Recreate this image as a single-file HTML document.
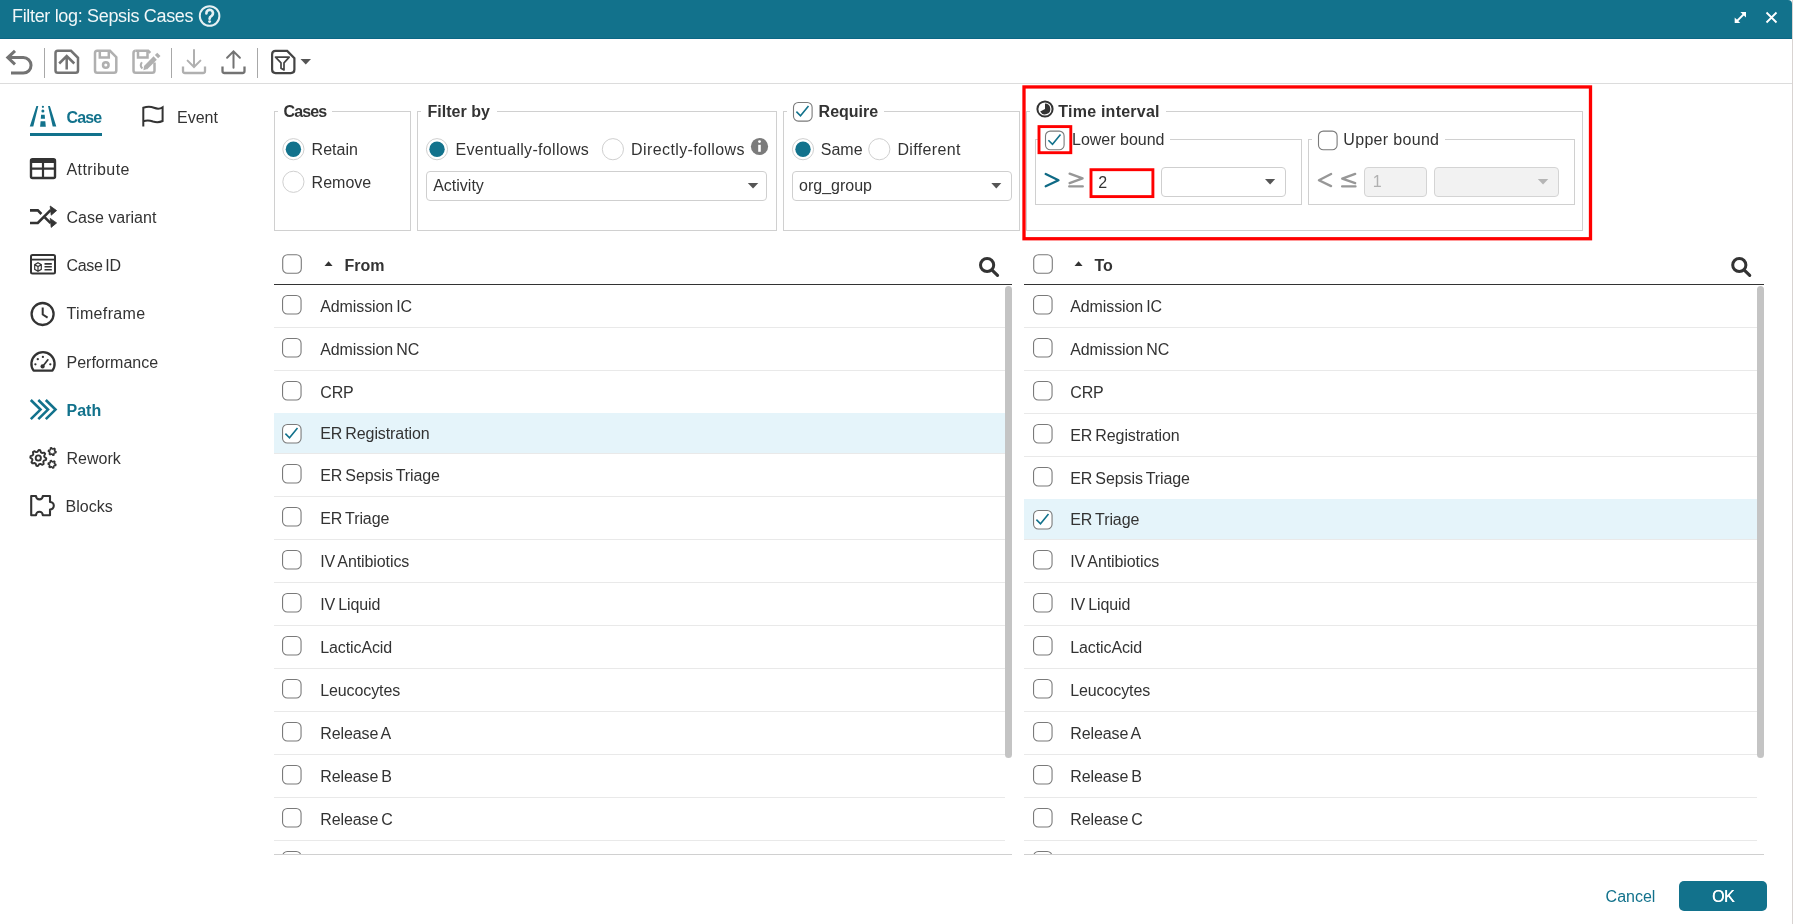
<!DOCTYPE html>
<html><head><meta charset="utf-8"><title>Filter log</title>
<style>
html,body{margin:0;padding:0;background:#fff;}
body{width:1793px;height:924px;position:relative;overflow:hidden;font-family:"Liberation Sans",sans-serif;}
.t{position:absolute;font-family:"Liberation Sans",sans-serif;font-size:16px;line-height:20px;color:#333;white-space:nowrap;}
.b{font-weight:bold;}
.teal{color:#12728c;}
</style></head><body>
<div style="position:absolute;left:0;top:0;width:1793px;height:924px;will-change:transform">
<div style="position:absolute;left:0px;top:0px;width:1792px;height:38px;background:#12728c;border-top-right-radius:4px"></div><div style="position:absolute;left:0px;top:38px;width:1792px;height:1px;background:#0b6785"></div><div style="position:absolute;left:1792px;top:0px;width:1px;height:924px;background:#d9d4d2"></div><div class="t" style="left:12px;top:4px;font-size:18px;line-height:24px;color:rgba(255,255,255,0.94);letter-spacing:-0.33px">Filter log: Sepsis Cases</div><div style="position:absolute;left:0px;top:83px;width:1792px;height:1px;background:#dcdcdc"></div><div style="position:absolute;left:44px;top:48px;width:1px;height:30px;background:#a8a8a8"></div><div style="position:absolute;left:171px;top:48px;width:1px;height:30px;background:#a8a8a8"></div><div style="position:absolute;left:257px;top:48px;width:1px;height:30px;background:#a8a8a8"></div><div style="position:absolute;left:30px;top:133px;width:72px;height:3px;background:#12728c"></div><div class="t b teal" style="left:66.5px;top:108px;letter-spacing:-0.85px">Case</div><div class="t " style="left:177px;top:108px;">Event</div><div style="position:absolute;left:30px;top:158.5px;width:26px;height:4.5px;background:#333;border-radius:2px 2px 0 0"></div><div class="t " style="left:66.5px;top:160px;letter-spacing:0.42px">Attribute</div><div class="t " style="left:66.5px;top:208px;">Case variant</div><div class="t " style="left:66.5px;top:256px;letter-spacing:-0.3px;word-spacing:-1.5px">Case ID</div><div class="t " style="left:66.5px;top:304px;letter-spacing:0.35px">Timeframe</div><div class="t " style="left:66.5px;top:353px;">Performance</div><div class="t b teal" style="left:66.5px;top:401px;">Path</div><div class="t " style="left:66.5px;top:449px;">Rework</div><div class="t " style="left:65.6px;top:497px;">Blocks</div><div style="position:absolute;left:274px;top:111px;width:4px;height:1px;background:#d0d0d0"></div><div style="position:absolute;left:332px;top:111px;width:79px;height:1px;background:#d0d0d0"></div><div style="position:absolute;left:274px;top:111px;width:1px;height:120px;background:#d0d0d0"></div><div style="position:absolute;left:410px;top:111px;width:1px;height:120px;background:#d0d0d0"></div><div style="position:absolute;left:274px;top:230px;width:137px;height:1px;background:#d0d0d0"></div><div class="t b" style="left:283.5px;top:102px;letter-spacing:-0.9px">Cases</div><div class="t " style="left:311.6px;top:140px;">Retain</div><div class="t " style="left:311.6px;top:173px;">Remove</div><div style="position:absolute;left:417px;top:111px;width:4px;height:1px;background:#d0d0d0"></div><div style="position:absolute;left:497px;top:111px;width:280px;height:1px;background:#d0d0d0"></div><div style="position:absolute;left:417px;top:111px;width:1px;height:120px;background:#d0d0d0"></div><div style="position:absolute;left:776px;top:111px;width:1px;height:120px;background:#d0d0d0"></div><div style="position:absolute;left:417px;top:230px;width:360px;height:1px;background:#d0d0d0"></div><div class="t b" style="left:427.6px;top:102px;">Filter by</div><div class="t " style="left:455.5px;top:140px;letter-spacing:0.31px">Eventually-follows</div><div class="t " style="left:631.1px;top:140px;letter-spacing:0.39px">Directly-follows</div><div style="position:absolute;left:426px;top:171px;width:341px;height:30px;box-sizing:border-box;border:1px solid #cfcfcf;border-radius:4px;background:#fff"></div><div class="t " style="left:433.2px;top:176px;">Activity</div><div style="position:absolute;left:783px;top:111px;width:4px;height:1px;background:#d0d0d0"></div><div style="position:absolute;left:884px;top:111px;width:136px;height:1px;background:#d0d0d0"></div><div style="position:absolute;left:783px;top:111px;width:1px;height:120px;background:#d0d0d0"></div><div style="position:absolute;left:1019px;top:111px;width:1px;height:120px;background:#d0d0d0"></div><div style="position:absolute;left:783px;top:230px;width:237px;height:1px;background:#d0d0d0"></div><div class="t b" style="left:818.6px;top:102px;">Require</div><div class="t " style="left:820.8px;top:140px;">Same</div><div class="t " style="left:897.4px;top:140px;letter-spacing:0.36px">Different</div><div style="position:absolute;left:792px;top:171px;width:220px;height:30px;box-sizing:border-box;border:1px solid #cfcfcf;border-radius:4px;background:#fff"></div><div class="t " style="left:799px;top:176px;">org_group</div><div style="position:absolute;left:1026px;top:111px;width:4px;height:1px;background:#d0d0d0"></div><div style="position:absolute;left:1166px;top:111px;width:417px;height:1px;background:#d0d0d0"></div><div style="position:absolute;left:1026px;top:111px;width:1px;height:120px;background:#d0d0d0"></div><div style="position:absolute;left:1582px;top:111px;width:1px;height:120px;background:#d0d0d0"></div><div style="position:absolute;left:1026px;top:230px;width:557px;height:1px;background:#d0d0d0"></div><div class="t b" style="left:1058.3px;top:102px;letter-spacing:0.23px">Time interval</div><div style="position:absolute;left:1035px;top:139px;width:4px;height:1px;background:#d0d0d0"></div><div style="position:absolute;left:1170px;top:139px;width:132px;height:1px;background:#d0d0d0"></div><div style="position:absolute;left:1035px;top:139px;width:1px;height:66px;background:#d0d0d0"></div><div style="position:absolute;left:1301px;top:139px;width:1px;height:66px;background:#d0d0d0"></div><div style="position:absolute;left:1035px;top:204px;width:267px;height:1px;background:#d0d0d0"></div><div class="t " style="left:1072px;top:130px;">Lower bound</div><div style="position:absolute;left:1090px;top:169px;width:64px;height:29px;box-sizing:border-box;border:1px solid #cfcfcf;border-radius:4px;background:#fff"></div><div class="t " style="left:1098.3px;top:173px;">2</div><div style="position:absolute;left:1161px;top:167px;width:125px;height:30px;box-sizing:border-box;border:1px solid #cfcfcf;border-radius:4px;background:#fff"></div><div style="position:absolute;left:1308px;top:139px;width:4px;height:1px;background:#d0d0d0"></div><div style="position:absolute;left:1445px;top:139px;width:130px;height:1px;background:#d0d0d0"></div><div style="position:absolute;left:1308px;top:139px;width:1px;height:66px;background:#d0d0d0"></div><div style="position:absolute;left:1574px;top:139px;width:1px;height:66px;background:#d0d0d0"></div><div style="position:absolute;left:1308px;top:204px;width:267px;height:1px;background:#d0d0d0"></div><div class="t " style="left:1343.3px;top:130px;letter-spacing:0.32px">Upper bound</div><div style="position:absolute;left:1364px;top:167px;width:63px;height:30px;box-sizing:border-box;border:1px solid #d4d4d4;border-radius:4px;background:#f2f2f2"></div><div class="t " style="left:1372.7px;top:172px;color:#b0b0b0">1</div><div style="position:absolute;left:1434px;top:167px;width:125px;height:30px;box-sizing:border-box;border:1px solid #d4d4d4;border-radius:4px;background:#f2f2f2"></div><div class="t b" style="left:344.5px;top:256px;">From</div><div style="position:absolute;left:274px;top:284px;width:738px;height:1.2px;background:#333"></div><div style="position:absolute;left:274px;top:285px;width:738px;height:569px;overflow:hidden"><div style="position:absolute;left:0;top:42px;width:731px;height:1px;background:#e9e9e9"></div><svg style="position:absolute;left:8.2px;top:10.2px" width="20" height="20"><rect x="0.55" y="0.55" width="18.5" height="18.5" rx="4.8" stroke="#7a7a7a" stroke-width="1.1" fill="#fff"/></svg><div class="t" style="left:46.2px;top:12px;word-spacing:-1.2px;letter-spacing:-0.1px">Admission IC</div><div style="position:absolute;left:0;top:85px;width:731px;height:1px;background:#e9e9e9"></div><svg style="position:absolute;left:8.2px;top:53.2px" width="20" height="20"><rect x="0.55" y="0.55" width="18.5" height="18.5" rx="4.8" stroke="#7a7a7a" stroke-width="1.1" fill="#fff"/></svg><div class="t" style="left:46.2px;top:55px;word-spacing:-1.2px;letter-spacing:-0.1px">Admission NC</div><svg style="position:absolute;left:8.2px;top:96.2px" width="20" height="20"><rect x="0.55" y="0.55" width="18.5" height="18.5" rx="4.8" stroke="#7a7a7a" stroke-width="1.1" fill="#fff"/></svg><div class="t" style="left:46.2px;top:98px;word-spacing:-1.2px;letter-spacing:-0.1px">CRP</div><div style="position:absolute;left:0;top:128px;width:731px;height:40px;background:#e5f4fa"></div><div style="position:absolute;left:0;top:168px;width:731px;height:1px;background:#e9e9e9"></div><svg style="position:absolute;left:8.2px;top:139px" width="20" height="20"><rect x="0.55" y="0.55" width="18.5" height="18.5" rx="4.8" stroke="#7a7a7a" stroke-width="1.1" fill="#fff"/><path d="M3.4,9.6 L7.5,13.7 L15.5,4" stroke="#12728c" stroke-width="1.6" fill="none"/></svg><div class="t" style="left:46.2px;top:138.5px;word-spacing:-1.2px;letter-spacing:-0.1px">ER Registration</div><div style="position:absolute;left:0;top:211px;width:731px;height:1px;background:#e9e9e9"></div><svg style="position:absolute;left:8.2px;top:179.2px" width="20" height="20"><rect x="0.55" y="0.55" width="18.5" height="18.5" rx="4.8" stroke="#7a7a7a" stroke-width="1.1" fill="#fff"/></svg><div class="t" style="left:46.2px;top:181px;word-spacing:-1.2px;letter-spacing:-0.1px">ER Sepsis Triage</div><div style="position:absolute;left:0;top:254px;width:731px;height:1px;background:#e9e9e9"></div><svg style="position:absolute;left:8.2px;top:222.2px" width="20" height="20"><rect x="0.55" y="0.55" width="18.5" height="18.5" rx="4.8" stroke="#7a7a7a" stroke-width="1.1" fill="#fff"/></svg><div class="t" style="left:46.2px;top:224px;word-spacing:-1.2px;letter-spacing:-0.1px">ER Triage</div><div style="position:absolute;left:0;top:297px;width:731px;height:1px;background:#e9e9e9"></div><svg style="position:absolute;left:8.2px;top:265.2px" width="20" height="20"><rect x="0.55" y="0.55" width="18.5" height="18.5" rx="4.8" stroke="#7a7a7a" stroke-width="1.1" fill="#fff"/></svg><div class="t" style="left:46.2px;top:267px;word-spacing:-1.2px;letter-spacing:-0.1px">IV Antibiotics</div><div style="position:absolute;left:0;top:340px;width:731px;height:1px;background:#e9e9e9"></div><svg style="position:absolute;left:8.2px;top:308.2px" width="20" height="20"><rect x="0.55" y="0.55" width="18.5" height="18.5" rx="4.8" stroke="#7a7a7a" stroke-width="1.1" fill="#fff"/></svg><div class="t" style="left:46.2px;top:310px;word-spacing:-1.2px;letter-spacing:-0.1px">IV Liquid</div><div style="position:absolute;left:0;top:383px;width:731px;height:1px;background:#e9e9e9"></div><svg style="position:absolute;left:8.2px;top:351.2px" width="20" height="20"><rect x="0.55" y="0.55" width="18.5" height="18.5" rx="4.8" stroke="#7a7a7a" stroke-width="1.1" fill="#fff"/></svg><div class="t" style="left:46.2px;top:353px;word-spacing:-1.2px;letter-spacing:-0.1px">LacticAcid</div><div style="position:absolute;left:0;top:426px;width:731px;height:1px;background:#e9e9e9"></div><svg style="position:absolute;left:8.2px;top:394.2px" width="20" height="20"><rect x="0.55" y="0.55" width="18.5" height="18.5" rx="4.8" stroke="#7a7a7a" stroke-width="1.1" fill="#fff"/></svg><div class="t" style="left:46.2px;top:396px;word-spacing:-1.2px;letter-spacing:-0.1px">Leucocytes</div><div style="position:absolute;left:0;top:469px;width:731px;height:1px;background:#e9e9e9"></div><svg style="position:absolute;left:8.2px;top:437.2px" width="20" height="20"><rect x="0.55" y="0.55" width="18.5" height="18.5" rx="4.8" stroke="#7a7a7a" stroke-width="1.1" fill="#fff"/></svg><div class="t" style="left:46.2px;top:439px;word-spacing:-1.2px;letter-spacing:-0.1px">Release A</div><div style="position:absolute;left:0;top:512px;width:731px;height:1px;background:#e9e9e9"></div><svg style="position:absolute;left:8.2px;top:480.2px" width="20" height="20"><rect x="0.55" y="0.55" width="18.5" height="18.5" rx="4.8" stroke="#7a7a7a" stroke-width="1.1" fill="#fff"/></svg><div class="t" style="left:46.2px;top:482px;word-spacing:-1.2px;letter-spacing:-0.1px">Release B</div><div style="position:absolute;left:0;top:555px;width:731px;height:1px;background:#e9e9e9"></div><svg style="position:absolute;left:8.2px;top:523.2px" width="20" height="20"><rect x="0.55" y="0.55" width="18.5" height="18.5" rx="4.8" stroke="#7a7a7a" stroke-width="1.1" fill="#fff"/></svg><div class="t" style="left:46.2px;top:525px;word-spacing:-1.2px;letter-spacing:-0.1px">Release C</div><div style="position:absolute;left:0;top:598px;width:731px;height:1px;background:#e9e9e9"></div><svg style="position:absolute;left:8.2px;top:566.2px" width="20" height="20"><rect x="0.55" y="0.55" width="18.5" height="18.5" rx="4.8" stroke="#7a7a7a" stroke-width="1.1" fill="#fff"/></svg><div class="t" style="left:46.2px;top:568px;word-spacing:-1.2px;letter-spacing:-0.1px">Release D</div><div style="position:absolute;left:731.2px;top:0.6px;width:6.8px;height:472px;background:#c4c4c4;border-radius:3.5px"></div></div><div style="position:absolute;left:274px;top:854px;width:738px;height:1px;background:#d0d0d0"></div><div class="t b" style="left:1094.5px;top:256px;">To</div><div style="position:absolute;left:1024px;top:284px;width:740px;height:1.2px;background:#333"></div><div style="position:absolute;left:1024px;top:285px;width:740px;height:569px;overflow:hidden"><div style="position:absolute;left:0;top:42px;width:733px;height:1px;background:#e9e9e9"></div><svg style="position:absolute;left:9.2px;top:10.2px" width="20" height="20"><rect x="0.55" y="0.55" width="18.5" height="18.5" rx="4.8" stroke="#7a7a7a" stroke-width="1.1" fill="#fff"/></svg><div class="t" style="left:46.2px;top:12px;word-spacing:-1.2px;letter-spacing:-0.1px">Admission IC</div><div style="position:absolute;left:0;top:85px;width:733px;height:1px;background:#e9e9e9"></div><svg style="position:absolute;left:9.2px;top:53.2px" width="20" height="20"><rect x="0.55" y="0.55" width="18.5" height="18.5" rx="4.8" stroke="#7a7a7a" stroke-width="1.1" fill="#fff"/></svg><div class="t" style="left:46.2px;top:55px;word-spacing:-1.2px;letter-spacing:-0.1px">Admission NC</div><div style="position:absolute;left:0;top:128px;width:733px;height:1px;background:#e9e9e9"></div><svg style="position:absolute;left:9.2px;top:96.2px" width="20" height="20"><rect x="0.55" y="0.55" width="18.5" height="18.5" rx="4.8" stroke="#7a7a7a" stroke-width="1.1" fill="#fff"/></svg><div class="t" style="left:46.2px;top:98px;word-spacing:-1.2px;letter-spacing:-0.1px">CRP</div><div style="position:absolute;left:0;top:171px;width:733px;height:1px;background:#e9e9e9"></div><svg style="position:absolute;left:9.2px;top:139.2px" width="20" height="20"><rect x="0.55" y="0.55" width="18.5" height="18.5" rx="4.8" stroke="#7a7a7a" stroke-width="1.1" fill="#fff"/></svg><div class="t" style="left:46.2px;top:141px;word-spacing:-1.2px;letter-spacing:-0.1px">ER Registration</div><svg style="position:absolute;left:9.2px;top:182.2px" width="20" height="20"><rect x="0.55" y="0.55" width="18.5" height="18.5" rx="4.8" stroke="#7a7a7a" stroke-width="1.1" fill="#fff"/></svg><div class="t" style="left:46.2px;top:184px;word-spacing:-1.2px;letter-spacing:-0.1px">ER Sepsis Triage</div><div style="position:absolute;left:0;top:214px;width:733px;height:40px;background:#e5f4fa"></div><div style="position:absolute;left:0;top:254px;width:733px;height:1px;background:#e9e9e9"></div><svg style="position:absolute;left:9.2px;top:225px" width="20" height="20"><rect x="0.55" y="0.55" width="18.5" height="18.5" rx="4.8" stroke="#7a7a7a" stroke-width="1.1" fill="#fff"/><path d="M3.4,9.6 L7.5,13.7 L15.5,4" stroke="#12728c" stroke-width="1.6" fill="none"/></svg><div class="t" style="left:46.2px;top:224.5px;word-spacing:-1.2px;letter-spacing:-0.1px">ER Triage</div><div style="position:absolute;left:0;top:297px;width:733px;height:1px;background:#e9e9e9"></div><svg style="position:absolute;left:9.2px;top:265.2px" width="20" height="20"><rect x="0.55" y="0.55" width="18.5" height="18.5" rx="4.8" stroke="#7a7a7a" stroke-width="1.1" fill="#fff"/></svg><div class="t" style="left:46.2px;top:267px;word-spacing:-1.2px;letter-spacing:-0.1px">IV Antibiotics</div><div style="position:absolute;left:0;top:340px;width:733px;height:1px;background:#e9e9e9"></div><svg style="position:absolute;left:9.2px;top:308.2px" width="20" height="20"><rect x="0.55" y="0.55" width="18.5" height="18.5" rx="4.8" stroke="#7a7a7a" stroke-width="1.1" fill="#fff"/></svg><div class="t" style="left:46.2px;top:310px;word-spacing:-1.2px;letter-spacing:-0.1px">IV Liquid</div><div style="position:absolute;left:0;top:383px;width:733px;height:1px;background:#e9e9e9"></div><svg style="position:absolute;left:9.2px;top:351.2px" width="20" height="20"><rect x="0.55" y="0.55" width="18.5" height="18.5" rx="4.8" stroke="#7a7a7a" stroke-width="1.1" fill="#fff"/></svg><div class="t" style="left:46.2px;top:353px;word-spacing:-1.2px;letter-spacing:-0.1px">LacticAcid</div><div style="position:absolute;left:0;top:426px;width:733px;height:1px;background:#e9e9e9"></div><svg style="position:absolute;left:9.2px;top:394.2px" width="20" height="20"><rect x="0.55" y="0.55" width="18.5" height="18.5" rx="4.8" stroke="#7a7a7a" stroke-width="1.1" fill="#fff"/></svg><div class="t" style="left:46.2px;top:396px;word-spacing:-1.2px;letter-spacing:-0.1px">Leucocytes</div><div style="position:absolute;left:0;top:469px;width:733px;height:1px;background:#e9e9e9"></div><svg style="position:absolute;left:9.2px;top:437.2px" width="20" height="20"><rect x="0.55" y="0.55" width="18.5" height="18.5" rx="4.8" stroke="#7a7a7a" stroke-width="1.1" fill="#fff"/></svg><div class="t" style="left:46.2px;top:439px;word-spacing:-1.2px;letter-spacing:-0.1px">Release A</div><div style="position:absolute;left:0;top:512px;width:733px;height:1px;background:#e9e9e9"></div><svg style="position:absolute;left:9.2px;top:480.2px" width="20" height="20"><rect x="0.55" y="0.55" width="18.5" height="18.5" rx="4.8" stroke="#7a7a7a" stroke-width="1.1" fill="#fff"/></svg><div class="t" style="left:46.2px;top:482px;word-spacing:-1.2px;letter-spacing:-0.1px">Release B</div><div style="position:absolute;left:0;top:555px;width:733px;height:1px;background:#e9e9e9"></div><svg style="position:absolute;left:9.2px;top:523.2px" width="20" height="20"><rect x="0.55" y="0.55" width="18.5" height="18.5" rx="4.8" stroke="#7a7a7a" stroke-width="1.1" fill="#fff"/></svg><div class="t" style="left:46.2px;top:525px;word-spacing:-1.2px;letter-spacing:-0.1px">Release C</div><div style="position:absolute;left:0;top:598px;width:733px;height:1px;background:#e9e9e9"></div><svg style="position:absolute;left:9.2px;top:566.2px" width="20" height="20"><rect x="0.55" y="0.55" width="18.5" height="18.5" rx="4.8" stroke="#7a7a7a" stroke-width="1.1" fill="#fff"/></svg><div class="t" style="left:46.2px;top:568px;word-spacing:-1.2px;letter-spacing:-0.1px">Release D</div><div style="position:absolute;left:733.2px;top:0.6px;width:6.8px;height:472px;background:#c4c4c4;border-radius:3.5px"></div></div><div style="position:absolute;left:1024px;top:854px;width:740px;height:1px;background:#d0d0d0"></div><div class="t teal" style="left:1605.6px;top:887px;">Cancel</div><div style="position:absolute;left:1679px;top:881px;width:88px;height:30px;background:#12728c;border-radius:5px"></div><div class="t " style="left:1679px;top:887px;width:88px;text-align:center;color:#fff;letter-spacing:-0.5px;text-shadow:0.35px 0 0 #fff">OK</div>
<svg style="position:absolute;left:0;top:0;pointer-events:none" width="1793" height="924"><circle cx="209.6" cy="16" r="9.8" stroke="#e6f0f3" stroke-width="2" fill="none"/><path d="M206.4,13.3 A3.3,3.3 0 1 1 211.6,15.8 Q209.6,17 209.6,18.7" stroke="#e6f0f3" stroke-width="2.7" fill="none" stroke-linecap="round"/><circle cx="209.6" cy="21.6" r="1.45" fill="#e6f0f3"/><path d="M1736.5,21.5 L1744.5,13.5" stroke="#fff" stroke-width="1.8" fill="none" /><path d="M1740.4,12 H1746 V17.6 Z" stroke="none" stroke-width="2" fill="#fff" /><path d="M1734.7,17.4 V23 H1740.3 Z" stroke="none" stroke-width="2" fill="#fff" /><path d="M1766.5,12.5 L1776.5,22.5 M1776.5,12.5 L1766.5,22.5" stroke="#fff" stroke-width="1.8" fill="none" /><path d="M15,50.8 L7.8,57.6 L15,64.4" stroke="#737373" stroke-width="3" fill="none" stroke-linejoin="miter"/><path d="M8,57.6 H23.3 A7.75,7.75 0 0 1 23.3,73.1 H11" stroke="#737373" stroke-width="3" fill="none" /><path d="M57.8,50.8 H71 L78,57.8 V70.5 Q78,72.8 75.7,72.8 H57.8 Q55.5,72.8 55.5,70.5 V53.1 Q55.5,50.8 57.8,50.8 Z" stroke="#737373" stroke-width="2.5" fill="none" /><path d="M66.7,55.5 V69.5 M59.2,63.5 L66.7,56 L74.3,63.5" stroke="#737373" stroke-width="2.5" fill="none" /><path d="M97.2,50.8 H110 L116.3,57.2 V70.5 Q116.3,72.8 114,72.8 H97.2 Q95,72.8 95,70.5 V53.1 Q95,50.8 97.2,50.8 Z" stroke="#b0b0b0" stroke-width="2.5" fill="none" /><path d="M99.8,51 V57.5 H108.8 V51" stroke="#b0b0b0" stroke-width="2.5" fill="none" /><circle cx="105.8" cy="65" r="2.8" stroke="#b0b0b0" stroke-width="2.5" fill="none"/><path d="M135.7,50.8 H148.2 L150.3,52.9" stroke="#b0b0b0" stroke-width="2.5" fill="none" /><path d="M154.5,62.5 V70.5 Q154.5,72.8 152.2,72.8 H135.7 Q133.5,72.8 133.5,70.5 V53.1 Q133.5,50.8 135.7,50.8" stroke="#b0b0b0" stroke-width="2.5" fill="none" /><path d="M138,51 V57.5 H147.5 V51" stroke="#b0b0b0" stroke-width="2.5" fill="none" /><path d="M145.4,67.8 L155.2,58" stroke="#b0b0b0" stroke-width="4.6" fill="none" /><path d="M143.4,70.2 L144.1,66.1 L147.1,69.1 Z" stroke="none" stroke-width="2" fill="#b0b0b0" /><path d="M156.5,56.7 L158.9,54.3" stroke="#b0b0b0" stroke-width="4.6" fill="none" /><path d="M142.4,68.4 Q139.4,65.8 141.9,62.2" stroke="#b0b0b0" stroke-width="2" fill="none" /><path d="M183,66.6 V71 Q183,73 185,73 H203 Q205,73 205,71 V66.6" stroke="#b0b0b0" stroke-width="2.3" fill="none" /><path d="M194,50 V66.5 M187.6,60.6 L194,67 L200.4,60.6" stroke="#b0b0b0" stroke-width="2.0" fill="none" stroke-linecap="round"/><path d="M222.5,66.6 V71 Q222.5,73 224.5,73 H242.5 Q244.5,73 244.5,71 V66.6" stroke="#737373" stroke-width="2.3" fill="none" /><path d="M233.5,51.5 V67.8 M227.1,57.8 L233.5,51.4 L239.9,57.8" stroke="#737373" stroke-width="2.0" fill="none" stroke-linecap="round"/><path d="M275.6,50.95 H287.2 L294.4,58.2 V69.6 Q294.4,73.15 290.9,73.15 H275.6 Q272.1,73.15 272.1,69.6 V54.45 Q272.1,50.95 275.6,50.95 Z" stroke="#444" stroke-width="2.2" fill="none" /><path d="M275.5,57.2 H289.2 L284,62.8 V70 L281,68.2 V62.8 Z" stroke="#444" stroke-width="1.7" fill="none" stroke-linejoin="round"/><path d="M300.5,59 H311 L305.75,64.6 Z" stroke="none" stroke-width="2" fill="#555" /><path d="M36.4,106 H38.3 L33.3,126.6 H29.8 Z M48,106 H49.9 L56.3,126.6 H52.7 Z" stroke="none" stroke-width="2" fill="#12728c" /><circle cx="42.9" cy="106.8" r="1.1" fill="#12728c"/><circle cx="42.9" cy="111" r="1.5" fill="#12728c"/><path d="M41.1,114.7 H44.7 L45,118.7 H40.8 Z M40.6,121.2 H45.3 L45.8,126.8 H40.1 Z" stroke="none" stroke-width="2" fill="#12728c" /><path d="M143.3,126.5 V107.8 Q149,105.8 154,107.8 Q159,109.8 162.6,107.3 V121 Q158,123.2 153,121.5 Q148,119.5 143.3,121.2" stroke="#333" stroke-width="2" fill="none" /><path d="M32.5,159.3 H53.5 Q55,159.3 55,160.8 V176.5 Q55,178 53.5,178 H32.5 Q31,178 31,176.5 V160.8 Q31,159.3 32.5,159.3 Z" stroke="#333" stroke-width="2.4" fill="none" /><path d="M31,168.6 H55 M43,162 V178" stroke="#333" stroke-width="2.2" fill="none" /><path d="M30,210.4 H37.8 L41.4,214 M44.8,217.4 L50.6,223.2" stroke="#333" stroke-width="2.6" fill="none" /><path d="M30,223 H37.8 L50.6,210.2" stroke="#333" stroke-width="2.6" fill="none" /><path d="M50.2,206 L56.6,210.6 L51.2,215.2 Z M50.2,218.4 L56.6,222.9 L51.2,227.4 Z" stroke="#333" stroke-width="0.8" fill="#333" stroke-linejoin="round"/><path d="M32.5,255 H53.5 Q55,255 55,256.5 V272 Q55,273.5 53.5,273.5 H32.5 Q31,273.5 31,272 V256.5 Q31,255 32.5,255 Z" stroke="#333" stroke-width="2" fill="none" /><path d="M31,259.6 H55" stroke="#333" stroke-width="1.8" fill="none" /><path d="M38,262.8 L41.3,264.7 V269.3 L38,271.2 L34.7,269.3 V264.7 Z M34.7,264.7 L38,266.6 L41.3,264.7 M38,266.6 V271.2" stroke="#333" stroke-width="1.2" fill="none" /><path d="M44.5,263.9 H51.8 M44.5,266.8 H51.8 M44.5,269.7 H51.8" stroke="#333" stroke-width="1.6" fill="none" /><circle cx="42.6" cy="314" r="11" stroke="#333" stroke-width="2.3" fill="none"/><path d="M42.7,307.5 V314.5 L47.6,317.6" stroke="#333" stroke-width="2" fill="none" stroke-linejoin="round"/><path d="M33.6,370.6 A11.6,11.6 0 1 1 52.4,370.6 Z" stroke="#333" stroke-width="2.3" fill="none" stroke-linejoin="round"/><circle cx="35.4" cy="364.3" r="1.15" fill="#333"/><circle cx="37.8" cy="359.2" r="1.15" fill="#333"/><circle cx="42.9" cy="356.9" r="1.15" fill="#333"/><circle cx="50.3" cy="364.3" r="1.15" fill="#333"/><path d="M43,366 L48.3,359.2" stroke="#333" stroke-width="1.7" fill="none" /><circle cx="42.6" cy="366.4" r="2.1" fill="#333"/><path d="M30.8,400 L40.5,409.6 L30.8,419.2 M38.3,400 L48,409.6 L38.3,419.2 M45.8,400 L55.5,409.6 L45.8,419.2" stroke="#12728c" stroke-width="2.6" fill="none" /><path d="M46.29,458.39 L46.06,459.94 L43.90,460.65 L43.28,461.69 L43.67,463.93 L42.41,464.86 L40.39,463.84 L39.21,464.13 L37.91,465.99 L36.36,465.76 L35.65,463.60 L34.61,462.98 L32.37,463.37 L31.44,462.11 L32.46,460.09 L32.17,458.91 L30.31,457.61 L30.54,456.06 L32.70,455.35 L33.32,454.31 L32.93,452.07 L34.19,451.14 L36.21,452.16 L37.39,451.87 L38.69,450.01 L40.24,450.24 L40.95,452.40 L41.99,453.02 L44.23,452.63 L45.16,453.89 L44.14,455.91 L44.43,457.09 Z" stroke="#333" stroke-width="1.9" fill="none" stroke-linejoin="round"/><circle cx="38.3" cy="458" r="2.6" stroke="#333" stroke-width="1.9" fill="none"/><path d="M55.99,451.75 L55.80,452.72 L54.36,452.94 L53.91,453.45 L53.88,454.91 L52.94,455.23 L52.03,454.09 L51.36,453.96 L50.09,454.66 L49.34,454.01 L49.87,452.65 L49.65,452.01 L48.41,451.25 L48.60,450.28 L50.04,450.06 L50.49,449.55 L50.52,448.09 L51.46,447.77 L52.37,448.91 L53.04,449.04 L54.31,448.34 L55.06,448.99 L54.53,450.35 L54.75,450.99 Z" stroke="#333" stroke-width="1.6" fill="none" stroke-linejoin="round"/><path d="M55.79,464.55 L55.60,465.52 L54.16,465.74 L53.71,466.25 L53.68,467.71 L52.74,468.03 L51.83,466.89 L51.16,466.76 L49.89,467.46 L49.14,466.81 L49.67,465.45 L49.45,464.81 L48.21,464.05 L48.40,463.08 L49.84,462.86 L50.29,462.35 L50.32,460.89 L51.26,460.57 L52.17,461.71 L52.84,461.84 L54.11,461.14 L54.86,461.79 L54.33,463.15 L54.55,463.79 Z" stroke="#333" stroke-width="1.6" fill="none" stroke-linejoin="round"/><path d="M31.2,496 H36 A3.4,3.4 0 0 0 42.8,496 H50 V502 A3.8,3.8 0 0 1 50,509.6 V515.2 H42.8 A3.4,3.4 0 0 0 36,515.2 H31.2 Z" stroke="#333" stroke-width="2.1" fill="none" stroke-linejoin="round"/><circle cx="293.4" cy="149.2" r="10.6" stroke="#cfcfcf" stroke-width="1" fill="#fff"/><circle cx="293.4" cy="149.2" r="7.7" fill="#12728c"/><circle cx="293.4" cy="181.8" r="10.6" stroke="#cfcfcf" stroke-width="1" fill="#fff"/><circle cx="437" cy="149.2" r="10.6" stroke="#cfcfcf" stroke-width="1" fill="#fff"/><circle cx="437" cy="149.2" r="7.7" fill="#12728c"/><circle cx="612.9" cy="149.2" r="10.6" stroke="#cfcfcf" stroke-width="1" fill="#fff"/><circle cx="759.5" cy="146.5" r="8.6" fill="#7b7b7b"/><path d="M759.5,144.8 V151.8" stroke="#fff" stroke-width="2.6" fill="none" /><circle cx="759.5" cy="141.6" r="1.45" fill="#fff"/><path d="M747.8,183.0 H758.3 L753.05,188.6 Z" stroke="none" stroke-width="2" fill="#555" /><rect x="793.5" y="102.5" width="18.6" height="18.6" rx="4.8" ry="4.8" stroke="#7a7a7a" stroke-width="1.1" fill="#fff"/><path d="M796.4,111.6 L800.5,115.7 L808.5,106" stroke="#12728c" stroke-width="1.6" fill="none"/><circle cx="803" cy="149.2" r="10.6" stroke="#cfcfcf" stroke-width="1" fill="#fff"/><circle cx="803" cy="149.2" r="7.7" fill="#12728c"/><circle cx="879.3" cy="149.2" r="10.6" stroke="#cfcfcf" stroke-width="1" fill="#fff"/><path d="M991.3,183.0 H1001.3 L996.3,188.6 Z" stroke="none" stroke-width="2" fill="#555" /><circle cx="1045" cy="109" r="7.6" stroke="#333" stroke-width="2" fill="none"/><path d="M1045,103.6 A5.4,5.4 0 1 1 1040.2,111.6 L1045,109 Z" stroke="none" stroke-width="2" fill="#333" /><rect x="1045.5" y="131.1" width="18.6" height="18.6" rx="4.8" ry="4.8" stroke="#7a7a7a" stroke-width="1.1" fill="#fff"/><path d="M1048.4,140.2 L1052.5,144.29999999999998 L1060.5,134.6" stroke="#12728c" stroke-width="1.6" fill="none"/><path d="M1045.7,174 L1058.5,180.2 L1045.7,186.3" stroke="#0f6a85" stroke-width="2.3" fill="none" stroke-linecap="round" stroke-linejoin="round"/><path d="M1069.6,173.7 L1082.6,178.4 L1069.6,183.2 M1069.2,186.4 H1082.8" stroke="#979797" stroke-width="2.3" fill="none" stroke-linecap="round" stroke-linejoin="round"/><path d="M1265,179.0 H1275.2 L1270.1,184.6 Z" stroke="none" stroke-width="2" fill="#555" /><rect x="1318.5" y="131.1" width="18.6" height="18.6" rx="4.8" ry="4.8" stroke="#7a7a7a" stroke-width="1.1" fill="#fff"/><path d="M1331.1,174 L1318.9,180.2 L1331.1,186.1" stroke="#979797" stroke-width="2.3" fill="none" stroke-linecap="round" stroke-linejoin="round"/><path d="M1355.2,173.9 L1342.2,178.6 L1355.2,183.2 M1342.1,186.4 H1355.5" stroke="#979797" stroke-width="2.3" fill="none" stroke-linecap="round" stroke-linejoin="round"/><path d="M1537.8,179.0 H1548.3 L1543.05,184.6 Z" stroke="none" stroke-width="2" fill="#b5b5b5" /><rect x="1024" y="86.95" width="566.5" height="151.8" stroke="#f00" stroke-width="3.3" fill="none"/><rect x="1039" y="126.6" width="31.8" height="26.1" stroke="#f00" stroke-width="2.9" fill="none"/><rect x="1091" y="169.7" width="61.9" height="26.9" stroke="#f00" stroke-width="2.9" fill="none"/><rect x="282.7" y="254.7" width="18.6" height="18.6" rx="4.8" ry="4.8" stroke="#7a7a7a" stroke-width="1.1" fill="#fff"/><path d="M324.5,266 L328.55,261.2 L332.6,266 Z" stroke="none" stroke-width="2" fill="#333" /><circle cx="987.1" cy="265" r="6.6" stroke="#333" stroke-width="3" fill="none"/><path d="M992.1,270.2 L997.5,275.4" stroke="#333" stroke-width="3.2" fill="none" stroke-linecap="round"/><rect x="1033.7" y="254.7" width="18.6" height="18.6" rx="4.8" ry="4.8" stroke="#7a7a7a" stroke-width="1.1" fill="#fff"/><path d="M1074.5,266 L1078.55,261.2 L1082.6,266 Z" stroke="none" stroke-width="2" fill="#333" /><circle cx="1739.3" cy="265" r="6.6" stroke="#333" stroke-width="3" fill="none"/><path d="M1744.3,270.2 L1749.7,275.4" stroke="#333" stroke-width="3.2" fill="none" stroke-linecap="round"/></svg>
</div>
</body></html>
